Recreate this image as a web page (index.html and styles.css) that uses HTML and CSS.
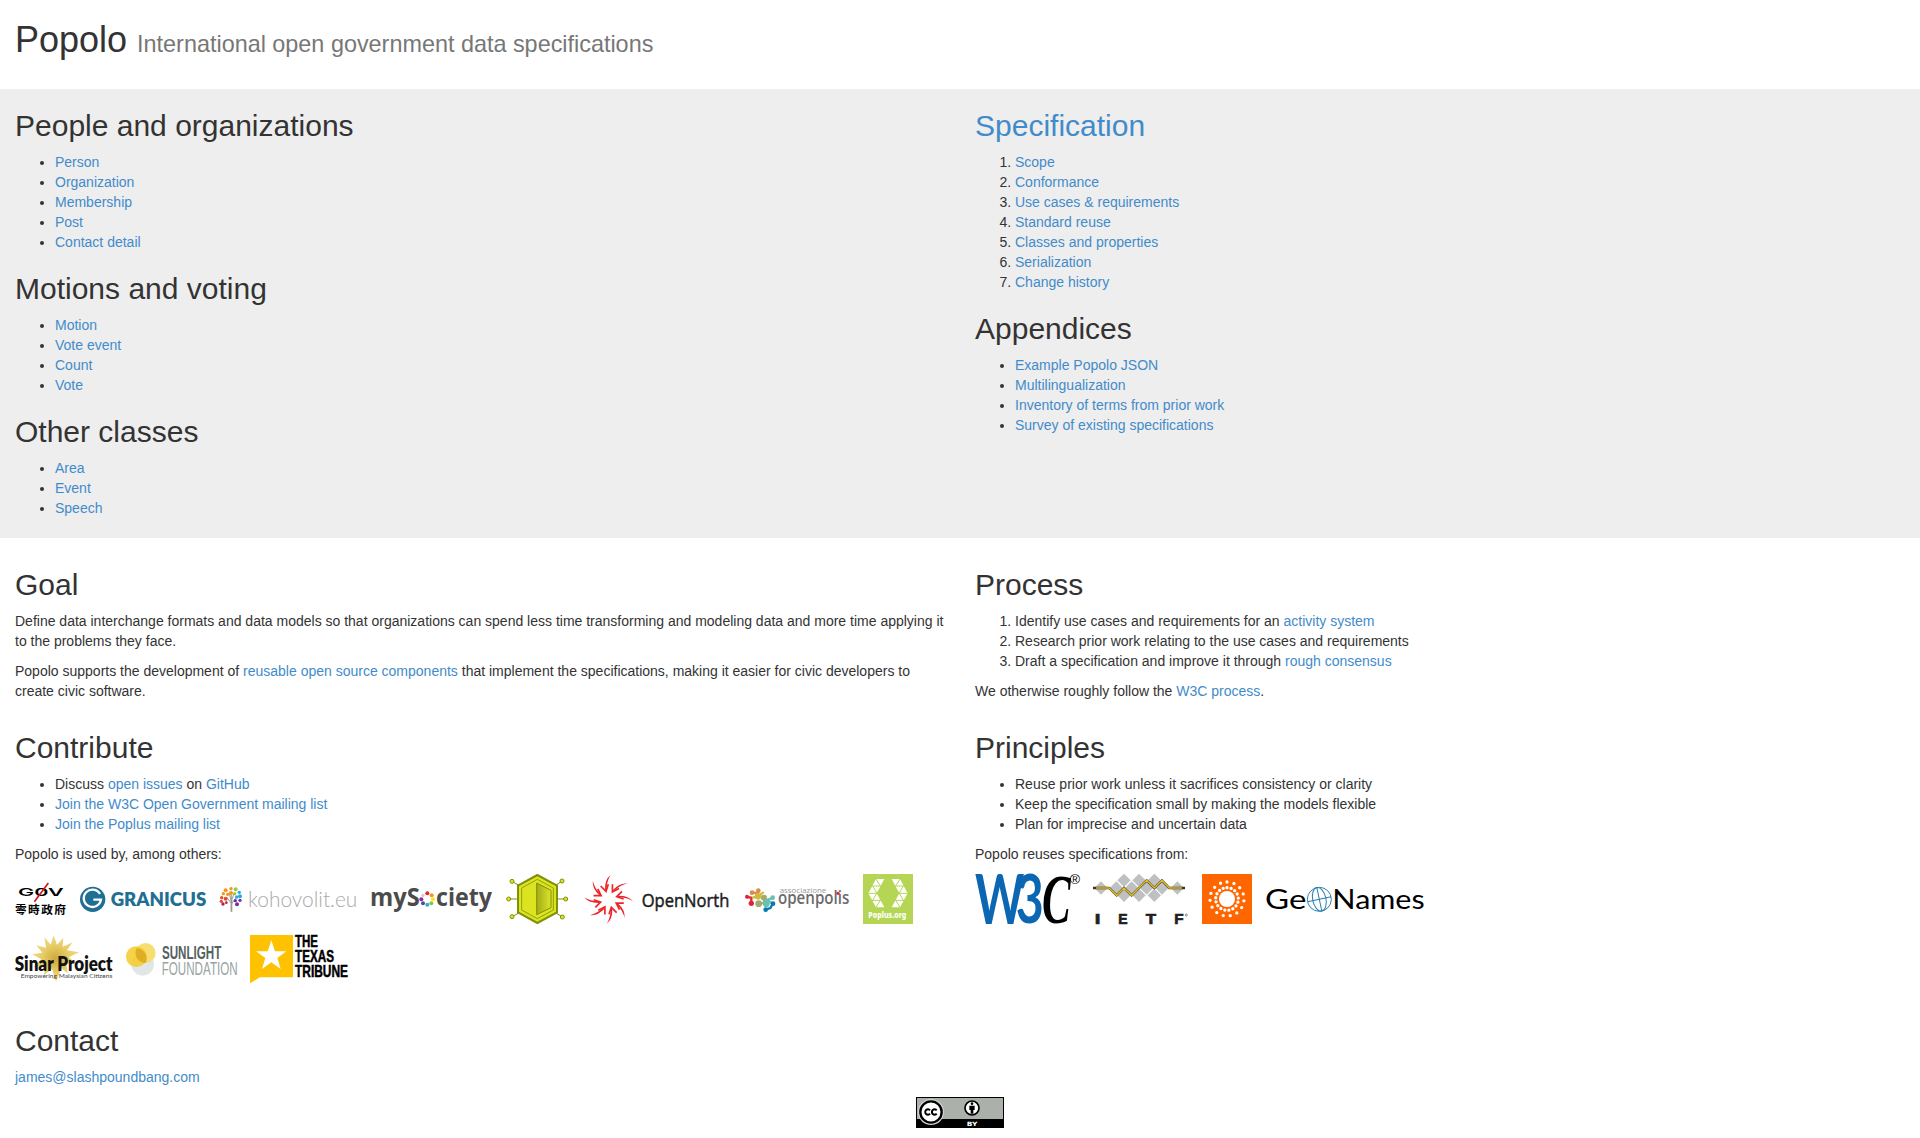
FILE: index.html
```html
<!DOCTYPE html>
<html lang="en">
<head>
<meta charset="utf-8">
<title>Popolo</title>
<link rel="stylesheet" href="styles.css">
</head>
<body>
<header class="container">
  <h1>Popolo <small>International open government data specifications</small></h1>
</header>

<section class="overview columns">
  <div class="column">
    <h2>People and organizations</h2>
    <ul>
      <li><a href="#">Person</a></li>
      <li><a href="#">Organization</a></li>
      <li><a href="#">Membership</a></li>
      <li><a href="#">Post</a></li>
      <li><a href="#">Contact detail</a></li>
    </ul>
    <h2>Motions and voting</h2>
    <ul>
      <li><a href="#">Motion</a></li>
      <li><a href="#">Vote event</a></li>
      <li><a href="#">Count</a></li>
      <li><a href="#">Vote</a></li>
    </ul>
    <h2>Other classes</h2>
    <ul>
      <li><a href="#">Area</a></li>
      <li><a href="#">Event</a></li>
      <li><a href="#">Speech</a></li>
    </ul>
  </div>
  <div class="column">
    <h2><a href="#">Specification</a></h2>
    <ol>
      <li><a href="#">Scope</a></li>
      <li><a href="#">Conformance</a></li>
      <li><a href="#">Use cases &amp; requirements</a></li>
      <li><a href="#">Standard reuse</a></li>
      <li><a href="#">Classes and properties</a></li>
      <li><a href="#">Serialization</a></li>
      <li><a href="#">Change history</a></li>
    </ol>
    <h2>Appendices</h2>
    <ul>
      <li><a href="#">Example Popolo JSON</a></li>
      <li><a href="#">Multilingualization</a></li>
      <li><a href="#">Inventory of terms from prior work</a></li>
      <li><a href="#">Survey of existing specifications</a></li>
    </ul>
  </div>
</section>

<section class="about columns">
  <div class="column">
    <h2>Goal</h2>
    <p>Define data interchange formats and data models so that organizations can spend less time transforming and modeling data and more time applying it to the problems they face.</p>
    <p>Popolo supports the development of <a href="#">reusable open source components</a> that implement the specifications, making it easier for civic developers to create civic software.</p>
  </div>
  <div class="column">
    <h2>Process</h2>
    <ol>
      <li>Identify use cases and requirements for an <a href="#">activity system</a></li>
      <li>Research prior work relating to the use cases and requirements</li>
      <li>Draft a specification and improve it through <a href="#">rough consensus</a></li>
    </ol>
    <p>We otherwise roughly follow the <a href="#">W3C process</a>.</p>
  </div>
</section>

<section class="community columns">
  <div class="column">
    <h2>Contribute</h2>
    <ul>
      <li>Discuss <a href="#">open issues</a> on <a href="#">GitHub</a></li>
      <li><a href="#">Join the W3C Open Government mailing list</a></li>
      <li><a href="#">Join the Poplus mailing list</a></li>
    </ul>
    <p>Popolo is used by, among others:</p>
    <div class="logos">
      <svg width="51" height="50" viewBox="45 42 153 150">
        <text class="inter semi" x="54" y="109" font-size="33" textLength="137" lengthAdjust="spacingAndGlyphs">G0V</text>
        <path d="M145 69L103 125" stroke="#d4141c" stroke-width="5"/>
        <text class="cjk" x="45" y="163" font-size="35" textLength="153">零時政府</text>
      </svg>
      <svg width="126" height="50" viewBox="240 42 378 150" fill="#1f6f94">
        <circle cx="278" cy="118" r="38"/>
        <path d="M300 102A26 26 0 1 0 303 119H280" fill="none" stroke="#fff" stroke-width="7"/>
        <text class="lato heavy" x="332" y="138" font-size="55" textLength="287" lengthAdjust="spacingAndGlyphs">GRANICUS</text>
      </svg>
      <svg width="137" height="50" viewBox="30 42 411 150">
        <path d="M64 155V105M64 130L50 112M64 132L80 112M64 124L72 100M64 124L57 98" fill="none" stroke="#999" stroke-width="3"/>
        <path d="M62 120V155H67V120" fill="#999"/>
        <g fill="#f7941e"><circle cx="47" cy="91" r="6"/><circle cx="40" cy="101" r="5"/><circle cx="63" cy="99" r="6"/><circle cx="63" cy="86" r="5"/><circle cx="53" cy="103" r="5"/></g>
        <g fill="#ea4b26"><circle cx="35" cy="113" r="5"/><circle cx="47" cy="116" r="6"/><circle cx="34" cy="124" r="5"/></g>
        <g fill="#b01c58"><circle cx="39" cy="132" r="5"/><circle cx="49" cy="128" r="4"/></g>
        <g fill="#9acb3c"><circle cx="77" cy="88" r="6"/><circle cx="74" cy="101" r="5"/></g>
        <g fill="#29a9df"><circle cx="88" cy="97" r="5"/><circle cx="90" cy="109" r="6"/><circle cx="80" cy="111" r="5"/></g>
        <g fill="#7130a8"><circle cx="90" cy="121" r="5"/><circle cx="81" cy="133" r="6"/><circle cx="76" cy="122" r="5"/></g>
        <text class="lato light" x="114" y="142" font-size="66" fill="#aaa" textLength="328" lengthAdjust="spacingAndGlyphs">kohovolit.eu</text>
      </svg>
      <svg width="121" height="50" viewBox="483 42 363 150" fill="#4b4b4b">
        <text class="open bold" x="480" y="138" font-size="75" textLength="149" lengthAdjust="spacingAndGlyphs">myS</text>
        <circle cx="652" cy="100" r="6" fill="#ec2027"/><circle cx="665" cy="106" r="6" fill="#f7941e"/><circle cx="669" cy="118" r="6" fill="#fce61c"/><circle cx="664" cy="130" r="6" fill="#8cc63f"/><circle cx="652" cy="134" r="6" fill="#23b5d3"/><circle cx="639" cy="130" r="6" fill="#4b4da0"/><circle cx="634" cy="118" r="6" fill="#92278f"/><circle cx="639" cy="106" r="5" fill="#ccc"/>
        <text class="open bold" x="678" y="138" font-size="75" textLength="168" lengthAdjust="spacingAndGlyphs">ciety</text>
      </svg>
      <svg width="64" height="50" viewBox="48 42 192 150">
        <defs><linearGradient id="cell"><stop offset="0" stop-color="#a3ab16"/><stop offset="1" stop-color="#dce42c"/></linearGradient></defs>
        <path d="M66 64L90 78M216 63L195 78M56 117H83M227 117H202M66 170L90 157M217 171L195 157" stroke="#7f9109" stroke-width="3"/>
        <g fill="#dce321" stroke="#7f9109" stroke-width="3"><circle cx="66" cy="64" r="6"/><circle cx="216" cy="63" r="6"/><circle cx="56" cy="117" r="6"/><circle cx="227" cy="117" r="6"/><circle cx="66" cy="170" r="6"/><circle cx="217" cy="171" r="6"/>
        <path stroke-width="6" d="M142 45L201 77V157L142 189L84 157V77Z"/>
        <path stroke-width="2.5" d="M142 58L190 84V150L142 176L95 150V84Z"/></g>
        <path d="M140 69L183 91V143L140 164Z" fill="url(#cell)" stroke="#7f9109" stroke-width="3"/>
      </svg>
      <svg width="147" height="50" viewBox="282 42 441 150">
        <defs><g id="ray"><path d="M362 45Q344 58 345 90L350 90Q350 62 362 45Z"/><path d="M332 78L348 94L355 73" fill="none" stroke="#ed2529" stroke-width="5"/></g></defs>
        <g fill="#ed2529"><use href="#ray"/><use href="#ray" transform="rotate(45 356 118)"/><use href="#ray" transform="rotate(90 356 118)"/><use href="#ray" transform="rotate(135 356 118)"/><use href="#ray" transform="rotate(180 356 118)"/><use href="#ray" transform="rotate(225 356 118)"/><use href="#ray" transform="rotate(270 356 118)"/><use href="#ray" transform="rotate(315 356 118)"/></g>
        <text class="open" x="455" y="140" font-size="57" fill="#1c1c1c" stroke="#1c1c1c" stroke-width="1.5" textLength="263" lengthAdjust="spacingAndGlyphs">OpenNorth</text>
      </svg>
      <svg width="104" height="50" viewBox="45 42 312 150">
        <g fill="none" stroke-linecap="round" stroke-width="7">
          <path d="M51 111L64 113V130" stroke="#dc2637"/><path d="M64 98L83 99L86 91" stroke="#df8a45"/><path d="M69 113L84 109L99 98" stroke="#cfba3d"/><path d="M86 131L103 129L102 112" stroke="#a0ab71"/><path d="M104 134L112 119L128 114M113 120L128 132" stroke="#66c1b5"/><path d="M129 130L121 144L107 149" stroke="#0979ae"/>
        </g>
        <g fill="#dc2637"><circle cx="51" cy="110" r="6"/><circle cx="64" cy="130" r="8"/></g>
        <g fill="#df8a45"><circle cx="66" cy="98" r="7"/><circle cx="85" cy="92" r="7"/></g>
        <circle cx="84" cy="109" r="10" fill="#cfba3d"/>
        <g fill="#a0ab71"><circle cx="86" cy="131" r="10"/><circle cx="102" cy="113" r="9"/></g>
        <g fill="#66c1b5"><circle cx="109" cy="131" r="10"/><circle cx="128" cy="113" r="7"/></g>
        <g fill="#0979ae"><circle cx="129" cy="131" r="7"/><circle cx="107" cy="149" r="7"/></g>
        <text class="open" x="149" y="98" font-size="22" fill="#999" textLength="140" lengthAdjust="spacingAndGlyphs">associazione</text>
        <text class="open semi" x="144" y="132" font-size="53" fill="#6a6b6e" textLength="214" lengthAdjust="spacingAndGlyphs">openpolis</text>
        <circle cx="324" cy="100" r="5" fill="#dc2637"/>
      </svg>
      <svg width="50" height="50" viewBox="399 42 150 150">
        <path d="M399 42H549V192H399Z" fill="#b5d654"/>
        <g fill="#fff"><path d="M438 57H463L440 100L463 142H438L415 100Z"/><path d="M510 57H485L508 100L485 142H510L533 100Z"/></g>
        <path d="M410 78H535M410 100H535M410 121H535M438 57L452 80M428 78L442 102M428 121L440 100M438 142L452 119M510 57L496 80M520 78L506 102M520 121L508 100M510 142L496 119" fill="none" stroke="#b5d654" stroke-width="3"/>
        <text class="noto heavy" x="415" y="173" font-size="26" fill="#fff" textLength="114" lengthAdjust="spacingAndGlyphs">Poplus.org</text>
      </svg>
      <svg width="97" height="50" viewBox="45 225 291 150">
        <defs><radialGradient id="gold"><stop offset="0" stop-color="#cfa83a"/><stop offset=".55" stop-color="#e6cb66"/><stop offset="1" stop-color="#f0da83"/></radialGradient></defs>
        <path fill="url(#gold)" d="M161 226L171 254L190 233L188 260L218 247L201 271L238 277L207 291L228 313L200 310L202 340L184 324L168 366L156 326L132 346L136 315L100 322L124 298L96 283L127 278L109 256L138 263L133 231L152 254Z"/>
        <text class="lato heavy" x="44" y="334" font-size="60" fill="#111" textLength="294" lengthAdjust="spacingAndGlyphs">Sinar Project</text>
        <text class="lato" x="62" y="355" font-size="19" fill="#444" textLength="275" lengthAdjust="spacingAndGlyphs">Empowering Malaysian Citizens</text>
      </svg>
      <svg width="110" height="50" viewBox="378 225 330 150">
        <circle cx="428" cy="313" r="34" fill="#e2e6e7"/><circle cx="437" cy="279" r="30" fill="#f6df70"/><circle cx="409" cy="290" r="31" fill="#f5cc2f" fill-opacity=".88"/>
        <path d="M410 265A30 30 0 0 0 437 309A31 31 0 0 0 410 265" fill="#dfae25"/>
        <text class="lib bold" x="486" y="298" font-size="55" fill="#55625f" textLength="178" lengthAdjust="spacingAndGlyphs">SUNLIGHT</text>
        <text class="lib" x="485" y="345" font-size="54" fill="#98a3a2" textLength="228" lengthAdjust="spacingAndGlyphs">FOUNDATION</text>
      </svg>
      <svg width="98" height="50" viewBox="120 225 294 150">
        <path d="M120 225H249V352H150L120 370Z" fill="#ffc200"/>
        <path d="M184 241L195 274H229L202 294L212 327L184 307L156 327L166 294L138 274H173Z" fill="#fff"/>
        <g class="lib bold" stroke="#000" stroke-width="1.5"><text x="255" y="262" font-size="51" textLength="69" lengthAdjust="spacingAndGlyphs">THE</text><text x="255" y="307" font-size="51" textLength="117" lengthAdjust="spacingAndGlyphs">TEXAS</text><text x="255" y="352" font-size="51" textLength="159" lengthAdjust="spacingAndGlyphs">TRIBUNE</text></g>
      </svg>
    </div>
  </div>
  <div class="column">
    <h2>Principles</h2>
    <ul>
      <li>Reuse prior work unless it sacrifices consistency or clarity</li>
      <li>Keep the specification small by making the models flexible</li>
      <li>Plan for imprecise and uncertain data</li>
    </ul>
    <p>Popolo reuses specifications from:</p>
    <div class="logos">
      <svg width="104" height="50" viewBox="45 42 312 150">
        <g fill="#0b67b2"><text class="lato bold" x="45" y="191" font-size="205" textLength="148" lengthAdjust="spacingAndGlyphs">W</text><text class="lato bold" x="167" y="190" font-size="203" textLength="84" lengthAdjust="spacingAndGlyphs">3</text></g>
        <text class="serif bold italic" x="246" y="188" font-size="212" textLength="86" lengthAdjust="spacingAndGlyphs">C</text>
        <text class="lib" x="329" y="71" font-size="40" textLength="31" lengthAdjust="spacingAndGlyphs">®</text>
      </svg>
      <svg width="95" height="50" viewBox="399 42 285 150">
        <defs><path id="tile" d="M0-20L20 0L0 20L-20 0Z"/></defs>
        <g fill="#bfc0c2"><use href="#tile" x="423" y="84"/><use href="#tile" x="492" y="61"/><use href="#tile" x="537" y="61"/><use href="#tile" x="583" y="61"/><use href="#tile" x="469" y="84"/><use href="#tile" x="515" y="84"/><use href="#tile" x="560" y="84"/><use href="#tile" x="606" y="84"/><use href="#tile" x="492" y="106"/><use href="#tile" x="537" y="106"/><use href="#tile" x="583" y="106"/><use href="#tile" x="652" y="84"/></g>
        <g fill="none"><path d="M399 84H447L470 106L492 84L515 106L560 61L583 84L606 61L628 84H675" stroke="#38352b" stroke-width="7"/><path d="M408 84H447L470 106L492 84L515 106L560 61L583 84L606 61L628 84H666" stroke="#e3bd22" stroke-width="4.5"/></g>
        <g class="lib bold" fill="#231f20" stroke="#231f20" stroke-width="2" font-size="43"><text x="404" y="191" textLength="17" lengthAdjust="spacingAndGlyphs">I</text><text x="475" y="191" textLength="28" lengthAdjust="spacingAndGlyphs">E</text><text x="557" y="191" textLength="31" lengthAdjust="spacingAndGlyphs">T</text><text x="643" y="191" textLength="28" lengthAdjust="spacingAndGlyphs">F</text></g>
        <circle cx="679" cy="165" r="3" fill="none" stroke="#555" stroke-width="2"/>
      </svg>
      <svg width="50" height="50" viewBox="36 42 150 150">
        <path d="M36 42H186V192H36Z" fill="#f60"/>
        <circle cx="111" cy="117" r="24" fill="#fff"/>
        <g fill="none" stroke="#fff" stroke-width="10" stroke-linecap="round" stroke-dasharray="0 1"><circle cx="111" cy="117" r="34" pathLength="17" transform="rotate(-90 111 117)"/><circle cx="111" cy="117" r="51" pathLength="15" transform="rotate(-90 111 117)"/></g>
      </svg>
      <svg width="158" height="50" viewBox="228 42 474 150">
        <text class="lato" x="225" y="146" font-size="81" textLength="124" lengthAdjust="spacingAndGlyphs">Ge</text>
        <g fill="none" stroke="#2c7fae" stroke-width="3"><circle cx="388" cy="118" r="36"/><g transform="rotate(-12 388 118)"><ellipse cx="388" cy="118" rx="20" ry="36"/><path d="M388 82V154M352 118H424"/></g></g>
        <text class="lato" x="427" y="146" font-size="81" textLength="277" lengthAdjust="spacingAndGlyphs">Names</text>
      </svg>
    </div>
  </div>
</section>

<section class="contact container">
  <h2>Contact</h2>
  <p><a href="#">james@slashpoundbang.com</a></p>
</section>

<footer>
  <svg width="88" height="31" viewBox="48 51 264 93">
    <path d="M48 51H312V144H48Z"/><path d="M51 54H309V117H51Z" fill="#abb1aa"/>
    <circle cx="93" cy="96" r="39" fill="#d0d5cf"/><path d="M48 135H130V144H48Z"/>
    <circle cx="93" cy="96" r="32" fill="#fff" stroke="#000" stroke-width="7"/>
    <g fill="none" stroke="#000" stroke-width="6"><path d="M90 91A8 8 0 1 0 90 101M110 91A8 8 0 1 0 110 101"/></g>
    <circle cx="216" cy="84" r="21" fill="#fff" stroke="#000" stroke-width="5"/>
    <circle cx="216" cy="71" r="4"/><path d="M208 77H224V90H220V101H212V90H208Z"/>
    <text class="dejavu bold" x="200" y="137" font-size="18" fill="#fff" textLength="32" lengthAdjust="spacingAndGlyphs">BY</text>
  </svg>
</footer>
</body>
</html>
```
FILE: styles.css
```css
* {
  box-sizing: border-box;
}

body {
  margin: 0;
  background: #fff;
  color: #333;
  font: 14px/20px "Liberation Sans", Arial, sans-serif;
}

a {
  color: #428bca;
  text-decoration: none;
}

h1,
h2 {
  margin: 20px 0 10px;
  font-weight: normal;
}

h1 {
  margin: 0;
  font-size: 36px;
  line-height: 39px;
}

h1 small {
  color: #777;
  font-size: 23.4px;
  line-height: 1;
}

h2 {
  font-size: 30px;
  line-height: 33px;
}

p,
ul,
ol {
  margin: 0 0 10px;
}

ul,
ol {
  padding-left: 40px;
}

.container {
  padding: 0 15px;
}

header.container {
  padding-top: 20px;
  padding-bottom: 30px;
}

.columns {
  display: grid;
  grid-template-columns: 1fr 1fr;
}

.column {
  padding: 0 15px;
}

.overview {
  padding-bottom: 10px;
  margin-bottom: 10px;
  background: #eee;
}

.logos {
  display: flex;
  flex-wrap: wrap;
  gap: 11px 14px;
}

.community {
  padding-bottom: 19px;
}

svg {
  display: block;
  overflow: visible;
}

footer {
  display: flex;
  justify-content: center;
}

.lib { font-family: "Liberation Sans", sans-serif; }
.serif { font-family: "Liberation Serif", serif; }
.lato { font-family: Lato, sans-serif; }
.open { font-family: "Open Sans", sans-serif; }
.noto { font-family: "Noto Sans", sans-serif; }
.inter { font-family: Inter, sans-serif; }
.dejavu { font-family: "DejaVu Sans", sans-serif; }
.cjk { font-family: "Noto Sans CJK TC", sans-serif; font-weight: 700; }
.light { font-weight: 300; }
.semi { font-weight: 600; }
.bold { font-weight: 700; }
.heavy { font-weight: 800; }
.italic { font-style: italic; }
```
